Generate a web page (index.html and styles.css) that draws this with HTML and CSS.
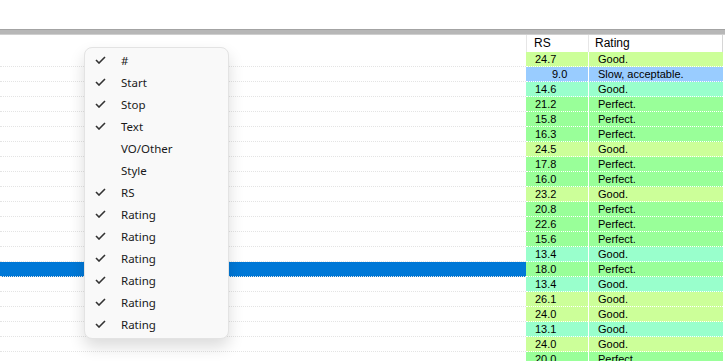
FILE: index.html
```html
<!DOCTYPE html>
<html lang="en">
<head>
  <meta charset="UTF-8">
  <title>Subtitle grid</title>
  <link rel="stylesheet" href="styles.css">
</head>
<body>
  <div class="top"></div>
  <div class="splitter"></div>

  <div class="grid">
    <div class="row head">
      <div class="c-main"></div>
      <div class="c-rs">RS</div>
      <div class="c-rating">Rating</div>
    </div>
    <div class="row good"><div class="c-main"></div><div class="c-rs">24.7</div><div class="c-rating">Good.</div></div>
    <div class="row slow"><div class="c-main"></div><div class="c-rs short">9.0</div><div class="c-rating">Slow, acceptable.</div></div>
    <div class="row fair"><div class="c-main"></div><div class="c-rs">14.6</div><div class="c-rating">Good.</div></div>
    <div class="row perfect"><div class="c-main"></div><div class="c-rs">21.2</div><div class="c-rating">Perfect.</div></div>
    <div class="row perfect"><div class="c-main"></div><div class="c-rs">15.8</div><div class="c-rating">Perfect.</div></div>
    <div class="row perfect"><div class="c-main"></div><div class="c-rs">16.3</div><div class="c-rating">Perfect.</div></div>
    <div class="row good"><div class="c-main"></div><div class="c-rs">24.5</div><div class="c-rating">Good.</div></div>
    <div class="row perfect"><div class="c-main"></div><div class="c-rs">17.8</div><div class="c-rating">Perfect.</div></div>
    <div class="row perfect"><div class="c-main"></div><div class="c-rs">16.0</div><div class="c-rating">Perfect.</div></div>
    <div class="row good"><div class="c-main"></div><div class="c-rs">23.2</div><div class="c-rating">Good.</div></div>
    <div class="row perfect"><div class="c-main"></div><div class="c-rs">20.8</div><div class="c-rating">Perfect.</div></div>
    <div class="row perfect"><div class="c-main"></div><div class="c-rs">22.6</div><div class="c-rating">Perfect.</div></div>
    <div class="row perfect"><div class="c-main"></div><div class="c-rs">15.6</div><div class="c-rating">Perfect.</div></div>
    <div class="row fair"><div class="c-main"></div><div class="c-rs">13.4</div><div class="c-rating">Good.</div></div>
    <div class="row perfect selected"><div class="c-main"></div><div class="c-rs">18.0</div><div class="c-rating">Perfect.</div></div>
    <div class="row fair"><div class="c-main"></div><div class="c-rs">13.4</div><div class="c-rating">Good.</div></div>
    <div class="row good"><div class="c-main"></div><div class="c-rs">26.1</div><div class="c-rating">Good.</div></div>
    <div class="row good"><div class="c-main"></div><div class="c-rs">24.0</div><div class="c-rating">Good.</div></div>
    <div class="row fair"><div class="c-main"></div><div class="c-rs">13.1</div><div class="c-rating">Good.</div></div>
    <div class="row good"><div class="c-main"></div><div class="c-rs">24.0</div><div class="c-rating">Good.</div></div>
    <div class="row perfect"><div class="c-main"></div><div class="c-rs">20.0</div><div class="c-rating">Perfect.</div></div>
  </div>

  <!-- column chooser -->
  <div class="menu">
    <div class="item on"><span class="check"><svg viewBox="0 0 11 8" width="11" height="8"><path d="M1 4 L4 7 L10 1"/></svg></span>#</div>
    <div class="item on"><span class="check"><svg viewBox="0 0 11 8" width="11" height="8"><path d="M1 4 L4 7 L10 1"/></svg></span>Start</div>
    <div class="item on"><span class="check"><svg viewBox="0 0 11 8" width="11" height="8"><path d="M1 4 L4 7 L10 1"/></svg></span>Stop</div>
    <div class="item on"><span class="check"><svg viewBox="0 0 11 8" width="11" height="8"><path d="M1 4 L4 7 L10 1"/></svg></span>Text</div>
    <div class="item"><span class="check"></span>VO/Other</div>
    <div class="item"><span class="check"></span>Style</div>
    <div class="item on"><span class="check"><svg viewBox="0 0 11 8" width="11" height="8"><path d="M1 4 L4 7 L10 1"/></svg></span>RS</div>
    <div class="item on"><span class="check"><svg viewBox="0 0 11 8" width="11" height="8"><path d="M1 4 L4 7 L10 1"/></svg></span>Rating</div>
    <div class="item on"><span class="check"><svg viewBox="0 0 11 8" width="11" height="8"><path d="M1 4 L4 7 L10 1"/></svg></span>Rating</div>
    <div class="item on"><span class="check"><svg viewBox="0 0 11 8" width="11" height="8"><path d="M1 4 L4 7 L10 1"/></svg></span>Rating</div>
    <div class="item on"><span class="check"><svg viewBox="0 0 11 8" width="11" height="8"><path d="M1 4 L4 7 L10 1"/></svg></span>Rating</div>
    <div class="item on"><span class="check"><svg viewBox="0 0 11 8" width="11" height="8"><path d="M1 4 L4 7 L10 1"/></svg></span>Rating</div>
    <div class="item on"><span class="check"><svg viewBox="0 0 11 8" width="11" height="8"><path d="M1 4 L4 7 L10 1"/></svg></span>Rating</div>
  </div>
</body>
</html>
```

FILE: styles.css
```css
body {
  margin: 0;
  width: 725px;
  height: 361px;
  overflow: hidden;
  background: #fff;
  font-family: 'Liberation Sans', Arial, sans-serif;
  font-size: 11px;
  color: #000;
}

.top {
  height: 29px;
}

.splitter {
  height: 6px;
  background: linear-gradient(#a3a3a3 0, #a3a3a3 1px, #b7b7b7 1px, #b7b7b7 5px, #cfcfcf 5px);
}

.grid {
  display: flex;
  flex-direction: column;
}

.row {
  display: flex;
  height: 15px;
  line-height: 14px;
}

.row > div {
  box-sizing: border-box;
  height: 15px;
  border-bottom: 1px dotted #fff;
}

.c-main {
  width: 526px;
}

.row > .c-main {
  border-bottom: 1px dotted #e4e4e4;
}

.c-rs {
  width: 62px;
  padding-left: 9px;
}

.c-rs.short {
  padding-left: 26px;
}

.c-rating {
  width: 135px;
  padding-left: 9px;
  border-left: 1px solid #fff;
}

/* header */
.row.head {
  height: 17px;
  font-size: 12px;
  line-height: 17px;
}

.row.head > div {
  height: 17px;
  border-bottom: none;
}

.row.head .c-rs {
  padding-left: 7px;
  border-left: 1px solid #e6e6e6;
}

.row.head .c-rating {
  padding-left: 6px;
  border-left: 1px solid #e6e6e6;
  border-right: 1px solid #d6d6d6;
}

.good .c-rs, .good .c-rating { background: #ccff99; }
.fair .c-rs, .fair .c-rating { background: #99ffcc; }
.perfect .c-rs, .perfect .c-rating { background: #99ff99; }
.slow .c-rs, .slow .c-rating { background: #99ccff; }

.row.selected > .c-main {
  background: #0078d7;
}

/* context menu */
.menu {
  position: absolute;
  left: 84px;
  top: 47px;
  width: 145px;
  box-sizing: border-box;
  padding: 1px 0 3px;
  background: #f9f9f9;
  border: 1px solid #e3e3e3;
  border-radius: 8px;
  box-shadow: 0 8px 16px rgba(0,0,0,0.14);
  font-family: 'Noto Sans', 'Open Sans', sans-serif;
  font-size: 11.5px;
  color: #1a1a1a;
}

.item {
  display: flex;
  align-items: center;
  height: 22px;
  padding-left: 10px;
}

.check {
  width: 26px;
  display: flex;
  align-items: center;
}

.check svg {
  fill: none;
  stroke: #333;
  stroke-width: 1.6;
}
```
